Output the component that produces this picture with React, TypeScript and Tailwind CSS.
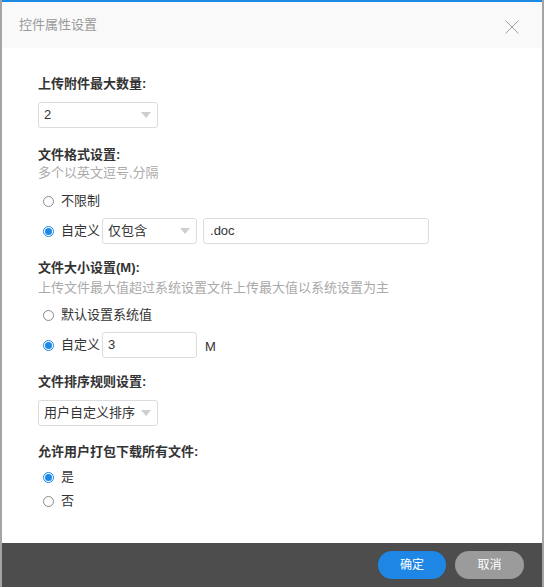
import React from "react";

const font = { fontFamily: '"Liberation Sans", "Noto Sans CJK SC", sans-serif' };

function Caret() {
  return (
    <span className="w-0 h-0 border-l-[5px] border-r-[5px] border-t-[6px] border-l-transparent border-r-transparent border-t-[#cfcfcf]" />
  );
}

function Select({ value, width }: { value: string; width: string }) {
  return (
    <div
      className={`${width} h-[26px] flex items-center justify-between pl-[5px] pr-[6px] border border-[#dcdcdc] rounded-[3px] bg-white text-[13px] text-[#333]`}
    >
      <span>{value}</span>
      <Caret />
    </div>
  );
}

function Radio({ checked }: { checked?: boolean }) {
  return checked ? (
    <span className="w-[11px] h-[11px] rounded-full border border-[#1e88e5] flex items-center justify-center shrink-0">
      <span className="w-[7px] h-[7px] rounded-full bg-[#1e88e5]" />
    </span>
  ) : (
    <span className="w-[11px] h-[11px] rounded-full border border-[#8a8a8a] shrink-0" />
  );
}

function RadioRow({
  checked,
  label,
  className,
  children,
}: {
  checked?: boolean;
  label: string;
  className?: string;
  children?: React.ReactNode;
}) {
  return (
    <div className={`flex items-center pl-[5px] ${className ?? ""}`}>
      <Radio checked={checked} />
      <span className="ml-[7px] mr-[2px] text-[13px] text-[#333] leading-[20px]">{label}</span>
      {children}
    </div>
  );
}

export default function App() {
  return (
    <div
      className="w-[544px] h-[587px] flex flex-col border-x-2 border-[#a4a4a4] bg-white"
      style={font}
    >
      <div className="h-[2px] bg-[#1e88e5]" />
      <header className="h-[46px] bg-[#f9f9f9] flex items-center justify-between pl-[17px] pr-[23px]">
        <span className="text-[13px] text-[#999]">控件属性设置</span>
        <svg width="14" height="14" viewBox="0 0 14 14" className="mt-[3px]">
          <path d="M0.5 0.5 L13.5 13.5 M13.5 0.5 L0.5 13.5" stroke="#a0a0a0" strokeWidth="1" />
        </svg>
      </header>

      <main className="flex-1 pl-[36px] pt-[27px] text-[13px] text-[#333] leading-[18px]">
        <div className="font-bold">上传附件最大数量:</div>
        <div className="mt-[9px]">
          <Select value="2" width="w-[120px]" />
        </div>

        <div className="font-bold mt-[18px]">文件格式设置:</div>
        <div className="text-[#aaa]">多个以英文逗号,分隔</div>
        <RadioRow label="不限制" className="mt-[9px]" />
        <RadioRow checked label="自定义" className="mt-[7px]">
          <Select value="仅包含" width="w-[95px]" />
          <div className="ml-[6px] w-[226px] h-[26px] flex items-center pl-[6px] border border-[#dcdcdc] rounded-[3px]">
            .doc
          </div>
        </RadioRow>

        <div className="font-bold mt-[15px]">文件大小设置(M):</div>
        <div className="text-[#aaa] mt-[2px]">上传文件最大值超过系统设置文件上传最大值以系统设置为主</div>
        <RadioRow label="默认设置系统值" className="mt-[8px]" />
        <RadioRow checked label="自定义" className="mt-[7px]">
          <div className="w-[95px] h-[26px] flex items-center pl-[5px] border border-[#dcdcdc] rounded-[3px]">
            3
          </div>
          <span className="ml-[8px] mt-[3px]">M</span>
        </RadioRow>

        <div className="font-bold mt-[15px]">文件排序规则设置:</div>
        <div className="mt-[9px]">
          <Select value="用户自定义排序" width="w-[120px]" />
        </div>

        <div className="font-bold mt-[17px]">允许用户打包下载所有文件:</div>
        <RadioRow checked label="是" className="mt-[6px]" />
        <RadioRow label="否" className="mt-[4px]" />
      </main>

      <footer className="h-[44px] bg-[#4d4d4d] flex items-center justify-end gap-[9px] pr-[18px]">
        <button className="w-[68px] h-[28px] rounded-full bg-[#1e86e5] text-white text-[12px]">确定</button>
        <button className="w-[69px] h-[28px] rounded-full bg-[#9b9b9b] text-white text-[12px]">取消</button>
      </footer>
    </div>
  );
}
